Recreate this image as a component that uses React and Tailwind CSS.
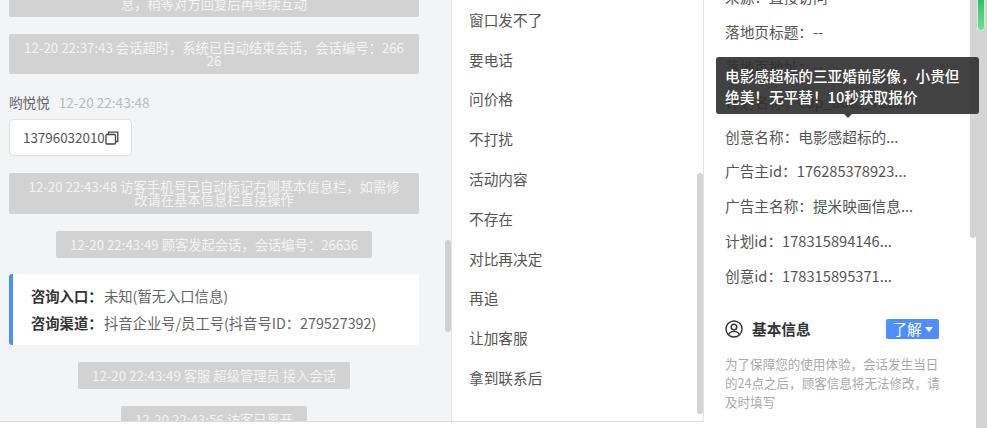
import React from "react";

const quickReplies = ["窗口发不了", "要电话", "问价格", "不打扰", "活动内容", "不存在", "对比再决定", "再追", "让加客服", "拿到联系后"];

const adInfo = [
  "来源：直接访问",
  "落地页标题：--",
  "落地页地址：--",
  "计划名称：cdp_auto_723...",
  "创意名称：电影感超标的...",
  "广告主id：176285378923...",
  "广告主名称：提米映画信息...",
  "计划id：178315894146...",
  "创意id：178315895371...",
];

function Notice({ children, className = "" }) {
  return (
    <div className={`rounded-[2px] bg-[#d1d2d1] px-[14px] py-[7px] text-center text-[13.3px] leading-[13px] break-all text-[#f4f4f4] ${className}`}>
      {children}
    </div>
  );
}

function CopyIcon() {
  return (
    <svg width="14" height="14" viewBox="0 0 14 14" fill="none" stroke="#444" strokeWidth="1.3">
      <rect x="1" y="3.5" width="9.5" height="9.5" rx="1" />
      <path d="M3.5 3.5V1.2h9.3v9.3h-2.3" />
    </svg>
  );
}

function UserIcon() {
  return (
    <svg width="18" height="18" viewBox="0 0 18 18" fill="none" stroke="#333" strokeWidth="1.4">
      <circle cx="9" cy="9" r="8" />
      <circle cx="9" cy="7" r="2.8" />
      <path d="M3.8 14.6c.8-2.2 2.8-3.2 5.2-3.2s4.4 1 5.2 3.2" />
    </svg>
  );
}

export default function App() {
  return (
    <div className="flex h-[428px] w-[987px] overflow-hidden bg-white font-['Noto_Sans_CJK_SC','Noto_Sans',sans-serif]">
      <div className="flex w-[704px] flex-col">
        <div className="flex min-h-0 flex-1">
          {/* chat */}
          <div className="relative w-[452px] overflow-hidden border-r border-[#e8e8e8] bg-[#f3f4f6]">
            <div className="flex w-[428px] flex-col gap-[17px] pl-[9px] pr-[9px]">
              <Notice className="-mt-[10px]">息，稍等对方回复后再继续互动</Notice>
              <Notice>
                12-20 22:37:43 会话超时，系统已自动结束会话，会话编号：266
                <br />
                26
              </Notice>
              <div className="mt-[2px]">
                <div className="flex items-center gap-[9px] pb-[1px] text-[13.6px] leading-[19px]">
                  <span className="text-[#666]">哟悦悦</span>
                  <span className="text-[#bbb]">12-20 22:43:48</span>
                </div>
                <div className="mt-[6px] flex h-[37px] w-[123px] items-center rounded-[4px] border border-[#e0e0e0] bg-white pl-[13px] text-[13.4px] text-[#555]">
                  13796032010
                  <CopyIcon />
                </div>
              </div>
              <Notice className="pb-[8px]">12-20 22:43:48 访客手机号已自动标记右侧基本信息栏，如需修改请在基本信息栏直接操作</Notice>
              <Notice className="self-center">12-20 22:43:49 顾客发起会话，会话编号：26636</Notice>
              <div className="-mt-px flex h-[71px] flex-col justify-center gap-[7px] rounded-[3px] border-l-4 border-[#4e8fff] bg-white pl-[18px] text-[14.3px] leading-[20px]">
                <div>
                  <span className="inline-block w-[73px] font-bold text-[#333]">咨询入口：</span>
                  <span className="text-[#666]">未知(暂无入口信息)</span>
                </div>
                <div>
                  <span className="inline-block w-[73px] font-bold text-[#333]">咨询渠道：</span>
                  <span className="text-[#666]">抖音企业号/员工号(抖音号ID：279527392)</span>
                </div>
              </div>
              <Notice className="self-center">12-20 22:43:49 客服 超级管理员 接入会话</Notice>
              <Notice className="self-center">12-20 22:43:56 访客已离开</Notice>
            </div>
            <div className="absolute right-0 top-[240px] h-[92px] w-[6px] rounded-[3px] bg-[#d0d0d0]" />
          </div>

          {/* quick replies */}
          <div className="relative flex-1 overflow-hidden border-r border-[#e4e4e4] pl-[17px]">
            {quickReplies.map((text) => (
              <div key={text} className="flex h-[39.8px] items-center text-[14.67px] text-[#555]">
                {text}
              </div>
            ))}
            <div className="absolute right-0 top-[173px] h-[241px] w-[6px] rounded-[3px] bg-[#d4d4d4]" />
          </div>
        </div>
        <div className="h-[7px] border-t border-[#dcdcdc] bg-white" />
      </div>

      {/* customer info */}
      <div className="relative flex flex-1">
        <div className="w-[272px] overflow-hidden pl-[21px]">
          <div className="-mt-[20px]">
            {adInfo.map((text) => (
              <div key={text} className="flex h-[34.8px] items-center text-[14.67px] text-[#555]">
                {text}
              </div>
            ))}
          </div>
          <div className="mt-[25px] flex w-[214px] items-center justify-between">
            <div className="flex items-center gap-[9px] text-[14.67px] font-bold text-[#333]">
              <UserIcon />
              基本信息
            </div>
            <div className="flex h-[20px] w-[53px] items-center justify-center gap-[3px] rounded-[2px] bg-[#4e8fff] text-[14.67px] text-white">
              了解
              <span className="h-0 w-0 border-x-[4px] border-t-[5px] border-x-transparent border-t-white" />
            </div>
          </div>
          <p className="mt-[14px] w-[218px] text-[12.56px] leading-[19px] text-[#aaa]">
            为了保障您的使用体验，会话发生当日的24点之后，顾客信息将无法修改，请及时填写
          </p>
        </div>
        <div className="flex-1 bg-[#d4d4d4]" />

        <div className="absolute left-[266px] top-0 h-[238px] w-[6px] rounded-b-[3px] bg-[#d4d4d4]" />
        <div className="absolute left-[273px] top-0 h-[31px] w-[8px] rounded-b-[4px] border border-t-0 border-[#e4e4e4] bg-gradient-to-b from-[#22c566] to-[#6fe08a]" />

        {/* tooltip */}
        <div className="absolute left-[12px] top-[57px] h-[57px] w-[263px] rounded-[3px] bg-[#2e2e2e]/90 pl-[9px] pr-[16px] pt-[8px] text-[14.67px] leading-[21px] font-medium text-white">
          电影感超标的三亚婚前影像，小贵但绝美！无平替！10秒获取报价
          <span className="absolute left-[128px] top-full h-0 w-0 border-x-[4px] border-t-[4px] border-x-transparent border-t-[#2e2e2e]/90" />
        </div>
      </div>
    </div>
  );
}
